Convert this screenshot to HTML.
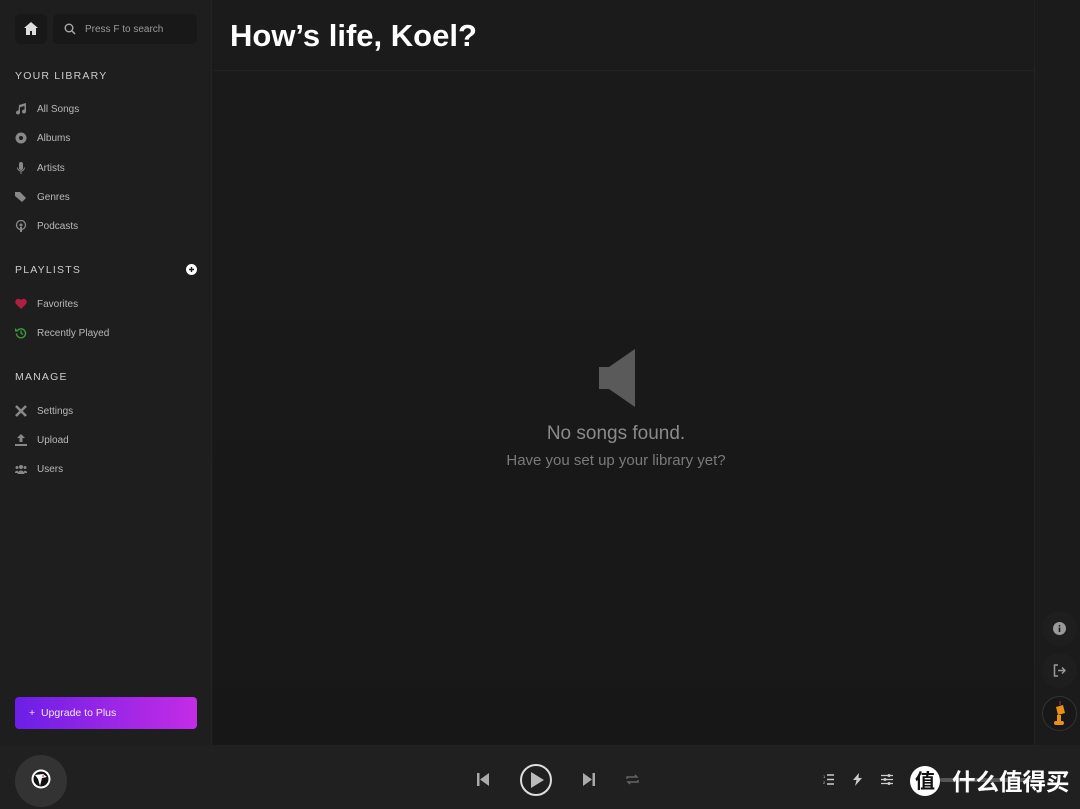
<!DOCTYPE html>
<html><head><meta charset="utf-8"><style>
*{box-sizing:border-box;margin:0;padding:0}
body{width:1080px;height:809px;overflow:hidden;background:#1b1b1b;font-family:"Liberation Sans",sans-serif;color:#aaa;position:relative}
#side{position:absolute;left:0;top:0;width:212px;height:745px;background:#1e1e1e;border-right:1px solid #232323}
.btn{position:absolute;background:#181818;border-radius:5px}
.h{position:absolute;left:15px;font-size:10.5px;letter-spacing:1.2px;color:#ccc}
.it{position:absolute;left:15px;font-size:10px;color:#b8b8b8;display:flex;align-items:center}
.it svg{width:12px;height:12px;margin-right:10px;fill:#888}
#main{position:absolute;left:213px;top:0;width:821px;height:745px;background:linear-gradient(#1b1b1b,#171717)}
#title{position:absolute;left:230px;top:18px;font-size:31px;font-weight:bold;color:#fff}
#hr{position:absolute;left:213px;top:70px;width:821px;height:1px;background:#222}
#right{position:absolute;left:1034px;top:0;width:46px;height:745px;background:#1b1b1b;border-left:1px solid #222}
.rb{position:absolute;left:1042px;width:35px;height:35px;border-radius:50%;background:#1e1e1e;display:flex;align-items:center;justify-content:center}
#foot{position:absolute;left:0;top:745px;width:1080px;height:64px;background:#202020}
</style></head><body>
<div id="side">
<div class="btn" style="left:15px;top:14px;width:32px;height:30px"><svg style="position:absolute;left:9px;top:8px" width="14" height="13" viewBox="0 0 14 13"><path d="M7 0L0 6h2v7h4V9h2v4h4V6h2z" fill="#ddd"/></svg></div>
<div class="btn" style="left:53px;top:14px;width:144px;height:30px"><svg style="position:absolute;left:11px;top:9px" width="12" height="12" viewBox="0 0 12 12"><circle cx="5" cy="5" r="3.8" stroke="#aaa" stroke-width="1.4" fill="none"/><path d="M8 8l3 3" stroke="#aaa" stroke-width="1.5"/></svg><span style="position:absolute;left:32px;top:10px;font-size:10px;color:#999">Press F to search</span></div>
<div class="h" style="top:70px">YOUR LIBRARY</div>
<div class="it" style="top:103px"><svg viewBox="0 0 12 12"><path d="M4 2l7-2v8.5a2 2 0 1 1-1.5-1.9V3L5 4.3v5.2a2 2 0 1 1-1.5-1.9z"/></svg>All Songs</div>
<div class="it" style="top:132px"><svg viewBox="0 0 12 12"><circle cx="6" cy="6" r="5.5"/><circle cx="6" cy="6" r="2" fill="#1e1e1e"/></svg>Albums</div>
<div class="it" style="top:162px"><svg viewBox="0 0 12 12"><rect x="4" y="0" width="4" height="8" rx="2"/><path d="M2.5 5.5a3.5 3.5 0 0 0 7 0M6 9v3" stroke="#888" fill="none"/></svg>Artists</div>
<div class="it" style="top:191px"><svg viewBox="0 0 12 12"><path d="M0 1h5l6 6-4 4-7-6z"/></svg>Genres</div>
<div class="it" style="top:220px"><svg viewBox="0 0 12 12"><circle cx="6" cy="5" r="4.5" stroke="#888" fill="none" stroke-width="1.3"/><circle cx="6" cy="5" r="1.5"/><rect x="5" y="7" width="2" height="5"/></svg>Podcasts</div>
<div class="h" style="top:264px">PLAYLISTS</div>
<svg style="position:absolute;left:186px;top:264px" width="11" height="11" viewBox="0 0 11 11"><circle cx="5.5" cy="5.5" r="5.5" fill="#fff"/><path d="M5.5 3v5M3 5.5h5" stroke="#1e1e1e" stroke-width="1.4"/></svg>
<div class="it" style="top:298px"><svg viewBox="0 0 12 12"><path d="M6 11L1 6a3 3 0 0 1 5-4 3 3 0 0 1 5 4z" fill="#b01e45"/></svg>Favorites</div>
<div class="it" style="top:327px"><svg viewBox="0 0 12 12"><path d="M2.5 3.5A4.5 4.5 0 1 1 1.5 6.5M6 3.5V6l2 1.5" stroke="#3b9a3b" stroke-width="1.4" fill="none"/><path d="M0 1l3.5 3.5H0z" fill="#3b9a3b"/></svg>Recently Played</div>
<div class="h" style="top:371px">MANAGE</div>
<div class="it" style="top:405px"><svg viewBox="0 0 12 12"><path d="M1 1l10 10M11 1L1 11" stroke="#888" stroke-width="2.6"/></svg>Settings</div>
<div class="it" style="top:434px"><svg viewBox="0 0 12 12"><path d="M6 0l4 4H7.5v4h-3V4H2z M0 10h12v2H0z"/></svg>Upload</div>
<div class="it" style="top:463px"><svg viewBox="0 0 12 12"><circle cx="6" cy="4" r="2"/><circle cx="2" cy="4.5" r="1.5"/><circle cx="10" cy="4.5" r="1.5"/><path d="M2.5 11a3.5 3.5 0 0 1 7 0zM0 10a2 2 0 0 1 3-2v2zM12 10a2 2 0 0 0-3-2v2z"/></svg>Users</div>
<div style="position:absolute;left:15px;top:697px;width:182px;height:32px;border-radius:4px;background:linear-gradient(90deg,#6b1fe6,#c42ce6);color:#f0e8ff;font-size:10.5px;padding:10px 0 0 14px">+&nbsp; Upgrade to Plus</div>
</div>
<div id="main"></div>
<div id="title">How’s life, Koel?</div>
<div id="hr"></div>
<svg style="position:absolute;left:597px;top:349px" width="40" height="58" viewBox="0 0 40 58"><path d="M2 18h10L38 0v58L12 40H2z" fill="#5a5a5a"/></svg>
<div style="position:absolute;left:0;width:1232px;top:423px;text-align:center;font-size:19px;color:#8a8a8a">No songs found.</div>
<div style="position:absolute;left:0;width:1232px;top:452px;text-align:center;font-size:15px;color:#7a7a7a">Have you set up your library yet?</div>
<div id="right"></div>
<div class="rb" style="top:611px"><svg width="13" height="13" viewBox="0 0 13 13"><circle cx="6.5" cy="6.5" r="6.5" fill="#999"/><rect x="5.7" y="5.5" width="1.6" height="4.5" fill="#1c1c1c"/><circle cx="6.5" cy="3.8" r="0.9" fill="#1c1c1c"/></svg></div>
<div class="rb" style="top:653px"><svg width="13" height="13" viewBox="0 0 13 13"><path d="M5 1H1.5v11H5M5 6.5h7M9 3.5l3 3-3 3" stroke="#999" stroke-width="1.5" fill="none"/></svg></div>
<div class="rb" style="top:696px;border:1px solid #333;background:#181818"><svg width="16" height="26" viewBox="0 0 16 26"><path d="M4 6l7-2 2 8-7 2z" fill="#e8901a"/><rect x="5" y="14" width="4" height="6" fill="#e8901a"/><rect x="2" y="20" width="10" height="4" rx="2" fill="#e8901a"/><path d="M8 0v4" stroke="#a33" stroke-width="1"/></svg></div>
<div id="foot">
<div style="position:absolute;left:15px;top:10px;width:52px;height:52px;border-radius:50%;background:#333"></div>
<svg style="position:absolute;left:31px;top:24px" width="20" height="20" viewBox="0 0 20 20"><circle cx="10" cy="10" r="9.5" fill="#fff"/><circle cx="10" cy="10" r="7.5" fill="#111"/><path d="M4 6l8-1 4 3-5 1-2 8-2-7z" fill="#fff"/><circle cx="12" cy="7" r="0.8" fill="#c00"/></svg>
<svg style="position:absolute;left:477px;top:28px" width="12" height="13" viewBox="0 0 12 13"><rect x="0" y="0" width="2.5" height="13" fill="#aaa"/><path d="M12 0v13L3 6.5z" fill="#aaa"/></svg>
<div style="position:absolute;left:520px;top:19px;width:32px;height:32px;border-radius:50%;border:2px solid #ddd"></div>
<svg style="position:absolute;left:531px;top:27px" width="13" height="16" viewBox="0 0 13 16"><path d="M0 0l13 8-13 8z" fill="#bbb"/></svg>
<svg style="position:absolute;left:583px;top:28px" width="12" height="13" viewBox="0 0 12 13"><path d="M0 0v13l9-6.5z" fill="#aaa"/><rect x="9.5" y="0" width="2.5" height="13" fill="#aaa"/></svg>
<svg style="position:absolute;left:626px;top:29px" width="13" height="11" viewBox="0 0 13 11"><path d="M1 5V3h10l-2-2M12 6v2H2l2 2" stroke="#666" stroke-width="1.4" fill="none"/></svg>
<svg style="position:absolute;left:823px;top:29px" width="11" height="11" viewBox="0 0 11 11"><path d="M4 1h7M4 5.5h7M4 10h7" stroke="#ccc" stroke-width="1.4"/><text x="0" y="4" font-size="4" fill="#ccc">1</text><text x="0" y="10" font-size="4" fill="#ccc">2</text></svg>
<svg style="position:absolute;left:853px;top:28px" width="9" height="13" viewBox="0 0 9 13"><path d="M6 0L0 7h3.5L2 13l7-8H5.5z" fill="#ccc"/></svg>
<svg style="position:absolute;left:881px;top:29px" width="12" height="11" viewBox="0 0 12 11"><path d="M0 1.5h12M0 5.5h12M0 9.5h12" stroke="#ccc" stroke-width="1.2"/><circle cx="8" cy="1.5" r="1.5" fill="#ccc"/><circle cx="4" cy="5.5" r="1.5" fill="#ccc"/><circle cx="8" cy="9.5" r="1.5" fill="#ccc"/></svg>
<div style="position:absolute;left:940px;top:33px;width:95px;height:4px;background:#555;border-radius:2px"></div>
<div style="position:absolute;left:910px;top:21px;width:30px;height:30px;border-radius:50%;background:#fff;color:#111;font-family:'Noto Sans CJK SC',sans-serif;font-size:20px;line-height:28px;text-align:center;font-weight:bold">值</div>
<div style="position:absolute;left:952px;top:18px;font-family:'Noto Sans CJK SC',sans-serif;font-size:23.5px;color:#fff;font-weight:bold">什么值得买</div>
</div>
</body></html>
